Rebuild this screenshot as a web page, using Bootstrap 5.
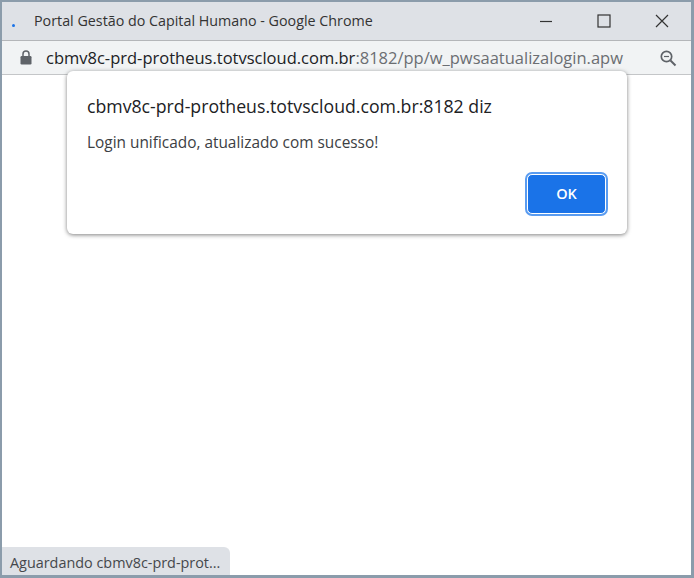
<!DOCTYPE html>
<html lang="pt-BR">

<head>
  <meta charset="utf-8" />
  <meta name="viewport" content="width=device-width, initial-scale=1" />
  <title>Portal Gestão do Capital Humano - Google Chrome</title>
  <link href="https://cdn.jsdelivr.net/npm/bootstrap@5.3.0/dist/css/bootstrap.min.css" rel="stylesheet" />
  <style>
    html, body {
      height: 100%;
      overflow: hidden;
    }

    body {
      background: #fff;
      font-family: "Open Sans", "Liberation Sans", sans-serif;
      color: #3c4043;
    }

    .chrome-window {
      height: 578px;
      border: 2px solid #8b9cab;
      border-right-width: 3px;
      border-bottom-width: 3px;
    }

    .title-bar {
      height: 39px;
      background: #dee1e6;
      border-bottom: 1px solid #b4b6b9;
      padding-left: 10px;
      font-size: 14.3px;
      color: #333;
    }

    .fav-dot {
      width: 3px;
      height: 3px;
      margin-top: 8px;
      margin-right: 19px;
      background: #1a73e8;
      border-radius: 50%;
    }

    .win-btn {
      width: 58px;
      height: 38px;
    }

    .address-bar {
      height: 34px;
      background: #f1f3f4;
      border-bottom: 1px solid #c4c6c8;
      padding-left: 18px;
      padding-right: 14px;
      font-size: 16.5px;
    }

    .url-text {
      margin-left: 14px;
      padding-top: 2px;
    }

    .url-host {
      color: #202124;
    }

    .url-rest {
      color: #6b6e72;
    }

    .page-area {
      position: relative;
    }

    .alert-box {
      position: absolute;
      top: -4px;
      left: 65px;
      width: 560px;
      height: 163px;
      padding: 23px 20px;
      background: #fff;
      border-radius: 6px;
      box-shadow: 0 1px 4px rgba(0, 0, 0, .5);
    }

    .alert-origin {
      font-size: 17.7px;
      line-height: 24px;
      color: #202124;
    }

    .alert-msg {
      margin-top: 14px;
      font-size: 15.4px;
      line-height: 22px;
      color: #3c4043;
    }

    .ok-btn {
      position: absolute;
      right: 21px;
      bottom: 20px;
      width: 79px;
      height: 40px;
      padding: 0;
      font-size: 14.5px;
      font-weight: 600;
      color: #fff;
      background: #1a73e8;
      border: 1px solid #fff;
      border-radius: 5px;
      outline: 2px solid #5a9cf0;
    }

    .status-tip {
      position: absolute;
      left: 0;
      bottom: 0;
      width: 228px;
      height: 28px;
      padding: 5px 8px 0;
      font-size: 14.4px;
      white-space: nowrap;
      color: #45484c;
      background: #dee1e6;
      border-top-right-radius: 6px;
    }
  </style>
</head>

<body>
  <div class="chrome-window d-flex flex-column">
    <div class="title-bar d-flex align-items-center flex-shrink-0">
      <span class="fav-dot"></span>
      <span class="flex-grow-1">Portal Gestão do Capital Humano - Google Chrome</span>
      <span class="win-btn d-flex align-items-center justify-content-center">
        <svg width="14" height="14" viewBox="0 0 14 14"><path d="M1 7.5h12" stroke="#333" stroke-width="1.2" /></svg>
      </span>
      <span class="win-btn d-flex align-items-center justify-content-center">
        <svg width="14" height="14" viewBox="0 0 14 14"><rect x="1" y="1" width="12" height="12" fill="none" stroke="#333" stroke-width="1.2" /></svg>
      </span>
      <span class="win-btn d-flex align-items-center justify-content-center">
        <svg width="14" height="14" viewBox="0 0 14 14"><path d="M1 1l12 12M13 1L1 13" stroke="#333" stroke-width="1.2" /></svg>
      </span>
    </div>

    <div class="address-bar d-flex align-items-center flex-shrink-0">
      <svg class="flex-shrink-0" width="12" height="15" viewBox="0 0 12 15">
        <path d="M3 6V4a3 3 0 0 1 6 0v2" fill="none" stroke="#5f6368" stroke-width="1.5" />
        <rect x="0.5" y="6" width="11" height="8.5" rx="1.2" fill="#5f6368" />
      </svg>
      <span class="url-text flex-grow-1"><span class="url-host">cbmv8c-prd-protheus.totvscloud.com.br</span><span class="url-rest">:8182/pp/w_pwsaatualizalogin.apw</span></span>
      <svg width="18" height="18" viewBox="0 0 18 18">
        <circle cx="7.5" cy="7.5" r="5.2" fill="none" stroke="#5f6368" stroke-width="1.7" />
        <path d="M11.5 11.5l5 5" stroke="#5f6368" stroke-width="2" />
        <path d="M5 7.5h5" stroke="#5f6368" stroke-width="1.2" />
      </svg>
    </div>

    <div class="page-area flex-grow-1">
      <div class="alert-box">
        <div class="alert-origin">cbmv8c-prd-protheus.totvscloud.com.br:8182 diz</div>
        <div class="alert-msg">Login unificado, atualizado com sucesso!</div>
        <button type="button" class="btn ok-btn">OK</button>
      </div>
      <div class="status-tip">Aguardando cbmv8c-prd-prot...</div>
    </div>
  </div>
</body>

</html>
